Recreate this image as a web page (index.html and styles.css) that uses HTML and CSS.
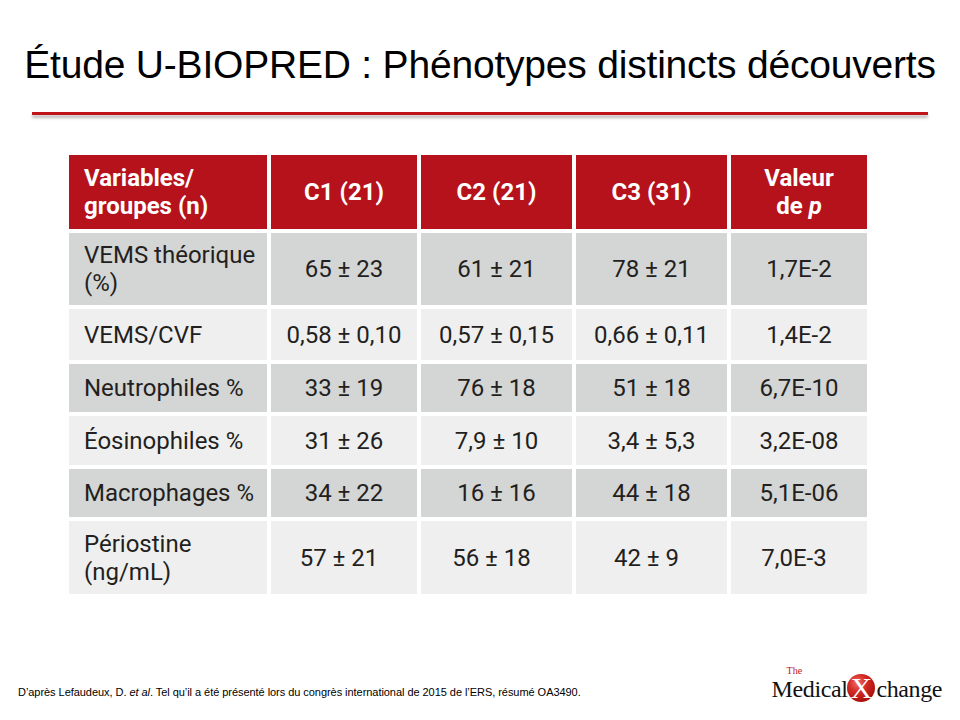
FILE: index.html
```html
<!DOCTYPE html>
<html lang="fr">
<head>
<meta charset="utf-8">
<title>Étude U-BIOPRED</title>
<link rel="stylesheet" href="styles.css">
</head>
<body>
<div class="slide">
  <h1 class="title">Étude U-BIOPRED : Phénotypes distincts découverts</h1>
  <div class="rule"></div>
  <div class="table">
    <div class="cell head first"><span>Variables/<br>groupes (n)</span></div>
    <div class="cell head"><span>C1 (21)</span></div>
    <div class="cell head"><span>C2 (21)</span></div>
    <div class="cell head"><span>C3 (31)</span></div>
    <div class="cell head"><span>Valeur<br>de <em>p</em></span></div>

    <div class="cell dark first"><span>VEMS théorique<br>(%)</span></div>
    <div class="cell dark"><span>65 ± 23</span></div>
    <div class="cell dark"><span>61 ± 21</span></div>
    <div class="cell dark"><span>78 ± 21</span></div>
    <div class="cell dark"><span>1,7E-2</span></div>

    <div class="cell light first"><span>VEMS/CVF</span></div>
    <div class="cell light"><span>0,58 ± 0,10</span></div>
    <div class="cell light"><span>0,57 ± 0,15</span></div>
    <div class="cell light"><span>0,66 ± 0,11</span></div>
    <div class="cell light"><span>1,4E-2</span></div>

    <div class="cell dark first"><span>Neutrophiles %</span></div>
    <div class="cell dark"><span>33 ± 19</span></div>
    <div class="cell dark"><span>76 ± 18</span></div>
    <div class="cell dark"><span>51 ± 18</span></div>
    <div class="cell dark"><span>6,7E-10</span></div>

    <div class="cell light first"><span>Éosinophiles %</span></div>
    <div class="cell light"><span>31 ± 26</span></div>
    <div class="cell light"><span>7,9 ± 10</span></div>
    <div class="cell light"><span>3,4 ± 5,3</span></div>
    <div class="cell light"><span>3,2E-08</span></div>

    <div class="cell dark first"><span>Macrophages %</span></div>
    <div class="cell dark"><span>34 ± 22</span></div>
    <div class="cell dark"><span>16 ± 16</span></div>
    <div class="cell dark"><span>44 ± 18</span></div>
    <div class="cell dark"><span>5,1E-06</span></div>

    <div class="cell light first"><span>Périostine<br>(ng/mL)</span></div>
    <div class="cell light shift"><span>57 ± 21</span></div>
    <div class="cell light shift"><span>56 ± 18</span></div>
    <div class="cell light shift"><span>42 ± 9</span></div>
    <div class="cell light shift"><span>7,0E-3</span></div>
  </div>
  <div class="footer">
    <p class="source">D’après Lefaudeux, D. <em>et al</em>. Tel qu’il a été présenté lors du congrès international de 2015 de l’ERS, résumé OA3490.</p>
    <div class="logo">
      <span class="logo-the">The</span>
      <span class="logo-word">Medical</span>
      <span class="logo-x">X</span>
      <span class="logo-word">change</span>
    </div>
  </div>
</div>
</body>
</html>
```

FILE: styles.css
```css
html, body {
  margin: 0;
  padding: 0;
  background: #ffffff;
}

.slide {
  width: 960px;
  height: 720px;
  display: flex;
  flex-direction: column;
  overflow: hidden;
  font-family: "Liberation Sans", Arial, sans-serif;
}

.title {
  margin: 42px 0 0 0;
  font-family: "Liberation Sans", Arial, sans-serif;
  font-weight: normal;
  font-size: 39px;
  line-height: 46px;
  letter-spacing: -0.2px;
  text-align: center;
  color: #000000;
  white-space: nowrap;
}

.rule {
  margin: 24px 32px 0 32px;
  height: 3px;
  background: #c0141c;
  box-shadow: 0 3px 3px rgba(0, 0, 0, 0.28);
}

.table {
  margin: 40px 0 0 69px;
  display: grid;
  grid-template-columns: 198px 146px 151px 151px 136px;
  grid-template-rows: 74px 72px 51px 48px 49px 48px 73px;
  gap: 4px;
  font-family: Roboto, "DejaVu Sans", sans-serif;
  font-size: 24px;
  line-height: 28px;
  color: #231f20;
}

.cell {
  display: flex;
  align-items: center;
  justify-content: center;
  text-align: center;
  white-space: nowrap;
}

.cell.first {
  justify-content: flex-start;
  text-align: left;
  padding-left: 15px;
}

.head {
  background: #b5121b;
  color: #ffffff;
  font-weight: bold;
}

.head em {
  font-style: italic;
}

.dark {
  background: #d4d5d5;
}

.light {
  background: #efefef;
}

.shift {
  padding-right: 10px;
}

.footer {
  margin-top: auto;
  display: flex;
  justify-content: space-between;
  align-items: flex-end;
  padding: 0 18px 20px 18px;
}

.source {
  margin: 0 0 1px 0;
  font-family: "Liberation Sans", Arial, sans-serif;
  font-size: 11px;
  line-height: 13px;
  letter-spacing: -0.05px;
  color: #000000;
}

.logo {
  position: relative;
  display: flex;
  align-items: flex-end;
  height: 34px;
}

.logo-word {
  font-family: "Liberation Serif", "Times New Roman", serif;
  font-size: 24px;
  line-height: 22px;
  color: #111111;
  letter-spacing: -0.4px;
}

.logo-the {
  position: absolute;
  left: 15px;
  top: 0;
  font-family: "Liberation Serif", "Times New Roman", serif;
  font-size: 10px;
  line-height: 10px;
  color: #c0141c;
}

.logo-x {
  flex: 0 0 28px;
  width: 28px;
  height: 28px;
  margin: 0 1px -2px 0;
  border-radius: 50%;
  background: radial-gradient(circle at 38% 32%, #f0706a 0%, #d42a24 35%, #a8100e 75%, #7a0806 100%);
  color: #ffffff;
  font-family: "Liberation Serif", "Times New Roman", serif;
  font-size: 30px;
  line-height: 28px;
  text-align: center;
}
```
